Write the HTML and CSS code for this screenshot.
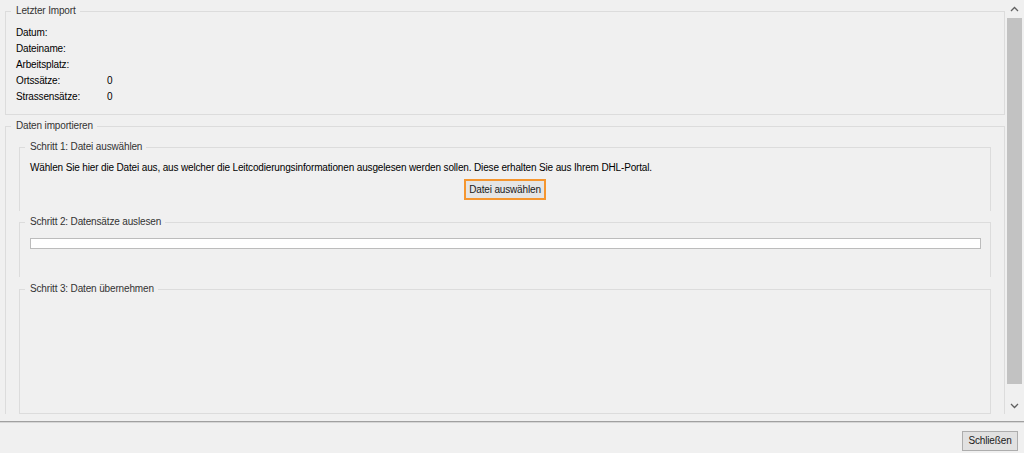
FILE: index.html
```html
<!DOCTYPE html>
<html lang="de">
<head>
<meta charset="utf-8">
<title>Import</title>
<link rel="stylesheet" href="styles.css">
</head>
<body>
<div class="window">
  <div class="scrollarea">
    <div class="content">
      <fieldset class="group group-last">
        <legend>Letzter Import</legend>
        <div class="info-row"><span class="info-label">Datum:</span><span class="info-value"></span></div>
        <div class="info-row"><span class="info-label">Dateiname:</span><span class="info-value"></span></div>
        <div class="info-row"><span class="info-label">Arbeitsplatz:</span><span class="info-value"></span></div>
        <div class="info-row"><span class="info-label">Ortssätze:</span><span class="info-value">0</span></div>
        <div class="info-row"><span class="info-label">Strassensätze:</span><span class="info-value">0</span></div>
      </fieldset>
      <fieldset class="group group-import">
        <legend>Daten importieren</legend>
        <fieldset class="step step-1">
          <legend>Schritt 1: Datei auswählen</legend>
          <p class="step-text">Wählen Sie hier die Datei aus, aus welcher die Leitcodierungsinformationen ausgelesen werden sollen. Diese erhalten Sie aus Ihrem DHL-Portal.</p>
          <div class="center"><button class="btn btn-focus" type="button">Datei auswählen</button></div>
        </fieldset>
        <fieldset class="step step-2">
          <legend>Schritt 2: Datensätze auslesen</legend>
          <div class="progress"></div>
        </fieldset>
        <fieldset class="step step-3">
          <legend>Schritt 3: Daten übernehmen</legend>
        </fieldset>
      </fieldset>
    </div>
    <div class="scrollbar">
      <div class="sb-arrow">
        <svg width="9" height="6" viewBox="0 0 9 6"><path d="M1 5 L4.5 1.5 L8 5" fill="none" stroke="#606060" stroke-width="1.3"/></svg>
      </div>
      <div class="sb-track"><div class="sb-thumb"></div></div>
      <div class="sb-arrow">
        <svg width="9" height="6" viewBox="0 0 9 6"><path d="M1 1 L4.5 4.5 L8 1" fill="none" stroke="#606060" stroke-width="1.3"/></svg>
      </div>
    </div>
  </div>
  <div class="footer">
    <button class="btn btn-close" type="button">Schließen</button>
  </div>
</div>
</body>
</html>
```
FILE: styles.css
```css
* { box-sizing: border-box; }
html, body {
  margin: 0;
  padding: 0;
  background: #f0f0f0;
  font-family: "Liberation Sans", Arial, sans-serif;
  font-size: 10px;
  letter-spacing: -0.15px;
  color: #000;
}
.window {
  width: 1024px;
  height: 453px;
  display: flex;
  flex-direction: column;
  overflow: hidden;
}
.scrollarea {
  height: 414px;
  display: flex;
  flex: none;
  overflow: hidden;
}
.content {
  width: 1006px;
  padding-left: 5px;
  overflow: hidden;
  padding-top: 4px;
}
fieldset {
  margin: 0;
  min-width: 0;
  border: 1px solid #dcdcdc;
}
legend {
  padding: 0 4px 0 5px;
  line-height: 14px;
  height: 14px;
  color: #333;
}
.group {
  width: 1000px;
  padding: 7px 0 9px 0;
}
.group-last legend { margin-left: 5px; }
.info-row {
  display: flex;
  line-height: 16px;
  height: 16px;
  padding-left: 10px;
}
.info-label { width: 91px; }
.group-import {
  margin-top: 4px;
  padding: 7px 13px 0 13px;
  border-bottom: none;
  height: 320px;
}
.group-import > legend { margin-left: -8px; }
.step {
  width: 972px;
  border-bottom: none;
  padding-left: 10px;
}
.step legend { margin-left: -5px; }
.step-1 {
  padding: 6px 10px 11px 10px;
}
.step-text {
  margin: 0;
  line-height: 16px;
  height: 16px;
  white-space: nowrap;
}
.center {
  display: flex;
  justify-content: center;
  margin-top: 3px;
}
.btn {
  font-family: "Liberation Sans", Arial, sans-serif;
  font-size: 10px;
  letter-spacing: -0.15px;
  color: #1a1a1a;
  background: #e1e1e1;
  border: 1px solid #adadad;
  padding: 0;
  margin: 0;
  line-height: 16px;
  white-space: nowrap;
}
.btn-focus {
  width: 82px;
  height: 21px;
  border: 2px solid #f5962f;
  background: #e5e5e5;
}
.step-2 {
  margin-top: 4px;
  padding: 9px 9px 28px 10px;
}
.progress {
  height: 11px;
  background: #fff;
  border: 1px solid #bcbcbc;
}
.step-3 {
  margin-top: 5px;
  height: 132px;
  border-bottom: 1px solid #dcdcdc;
}
.scrollbar {
  width: 18px;
  display: flex;
  flex-direction: column;
  padding-left: 1px;
}
.sb-arrow {
  height: 17px;
  width: 15px;
  display: flex;
  align-items: center;
  justify-content: center;
}
.sb-track {
  flex: 1;
  width: 15px;
  padding-top: 1px;
}
.sb-thumb {
  height: 366px;
  background: #c2c2c2;
}
.footer {
  margin-top: 7px;
  border-top: 1px solid #a0a0a0;
  box-shadow: inset 0 1px 0 #d6d6d6;
  flex: 1;
  display: flex;
  justify-content: flex-end;
  align-items: flex-start;
  padding: 9px 6px 0 0;
}
.btn-close {
  width: 56px;
  height: 20px;
}
```
